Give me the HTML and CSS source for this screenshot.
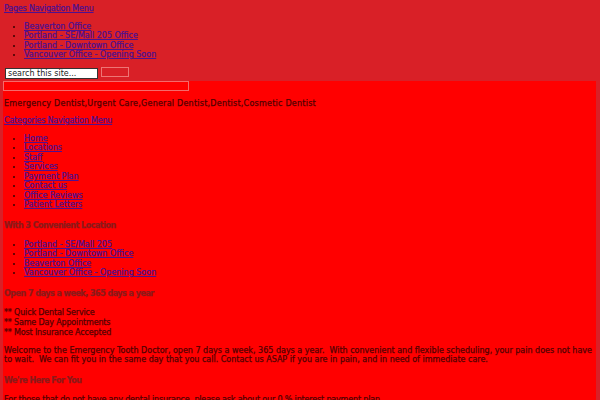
FILE: index.html
```html
<!DOCTYPE html>
<html>
<head>
<meta charset="utf-8">
<link rel="stylesheet" href="styles.css">
</head>
<body>
<div class="header">
  <a href="#" class="menu-title">Pages Navigation Menu</a>
  <ul class="list list-top">
    <li><a href="#">Beaverton Office</a></li>
    <li><a href="#">Portland - SE/Mall 205 Office</a></li>
    <li><a href="#">Portland - Downtown Office</a></li>
    <li><a href="#">Vancouver Office - Opening Soon</a></li>
  </ul>
  <form class="search">
    <input class="search-input" type="text" value="search this site...">
    <button class="search-btn" type="button"></button>
  </form>
</div>
<div class="content">
  <div class="banner"></div>
  <p class="tagline">Emergency Dentist,Urgent Care,General Dentist,Dentist,Cosmetic Dentist</p>
  <a href="#" class="menu-title cat-title">Categories Navigation Menu</a>
  <ul class="list list-cat">
    <li><a href="#">Home</a></li>
    <li><a href="#">Locations</a></li>
    <li><a href="#">Staff</a></li>
    <li><a href="#">Services</a></li>
    <li><a href="#">Payment Plan</a></li>
    <li><a href="#">Contact us</a></li>
    <li><a href="#">Office Reviews</a></li>
    <li><a href="#">Patient Letters</a></li>
  </ul>
  <h3 class="heading">With 3 Convenient Location</h3>
  <ul class="list list-loc">
    <li><a href="#">Portland - SE/Mall 205</a></li>
    <li><a href="#">Portland - Downtown Office</a></li>
    <li><a href="#">Beaverton Office</a></li>
    <li><a href="#">Vancouver Office - Opening Soon</a></li>
  </ul>
  <h3 class="heading">Open 7 days a week, 365 days a year</h3>
  <p class="text small features">** Quick Dental Service<br>** Same Day Appointments<br>** Most Insurance Accepted</p>
  <p class="text welcome">Welcome to the Emergency Tooth Doctor, open 7 days a week, 365 days a year.&nbsp; With convenient and flexible scheduling, your pain does not have to wait.&nbsp; We can fit you in the same day that you call. Contact us ASAP if you are in pain, and in need of immediate care.</p>
  <h3 class="heading heading-here">We're Here For You</h3>
  <p class="text small plan">For those that do not have any dental insurance, please ask about our 0 % interest payment plan.</p>
</div>
</body>
</html>
```
FILE: styles.css
```css
html, body {
  margin: 0;
  padding: 0;
}
body {
  background: #d92027;
  font-family: "DejaVu Sans", Verdana, sans-serif;
  font-size: 8px;
  line-height: 9px;
  color: #520000;
  -webkit-text-stroke: 0.25px currentColor;
}
a {
  color: #4e1090;
  text-decoration-thickness: 1px;
  text-underline-offset: 1px;
}
.header {
  padding: 4px 4px 0 4px;
}
.menu-title {
  display: block;
  letter-spacing: -0.2px;
}
.list {
  margin: 0;
  padding-left: 20px;
  color: #3a0000;
}
.list li {
  line-height: 9px;
}
.list li:nth-child(even) {
  padding-bottom: 1px;
}
.list-top {
  margin: 9px 0 7px 0;
}
.search {
  display: flex;
  align-items: flex-start;
  gap: 3px;
  margin: 0 0 0 1px;
  height: 14px;
}
.search-input {
  box-sizing: border-box;
  width: 93px;
  height: 11px;
  margin: 1px 0 0 0;
  padding: 0 2px;
  border: 1px solid #333;
  background: #fff;
  font-family: "DejaVu Sans", Verdana, sans-serif;
  font-size: 8px;
  color: #222;
  -webkit-text-stroke: 0;
}
.search-btn {
  box-sizing: border-box;
  width: 28px;
  height: 10px;
  margin: 0;
  padding: 0;
  border: 1px solid #ee7575;
  background: transparent;
}
.content {
  background: #ff0000;
  margin: 0 4px 0 3px;
  padding: 0 1px 20px 1px;
  overflow: hidden;
}
.banner {
  box-sizing: border-box;
  width: 186px;
  height: 10px;
  margin-left: -1px;
  border: 1px solid #f56a6a;
}
.tagline {
  letter-spacing: 0.24px;
  margin: 8px 0 0 0;
}
.cat-title {
  margin-top: 8px;
}
.list-cat {
  margin-top: 9px;
}
.heading {
  font-size: 8px;
  letter-spacing: -0.5px;
  font-weight: bold;
  color: #8b1a1a;
  margin: 11px 0 0 0;
}
.heading-here {
  margin-top: 12px;
}
.list-loc {
  margin-top: 10px;
}
.text {
  margin: 0;
}
.small {
  letter-spacing: -0.16px;
}
.features {
  margin-top: 10px;
  line-height: 10px;
}
.welcome {
  margin-top: 8px;
}
.plan {
  margin-top: 10px;
}
```
